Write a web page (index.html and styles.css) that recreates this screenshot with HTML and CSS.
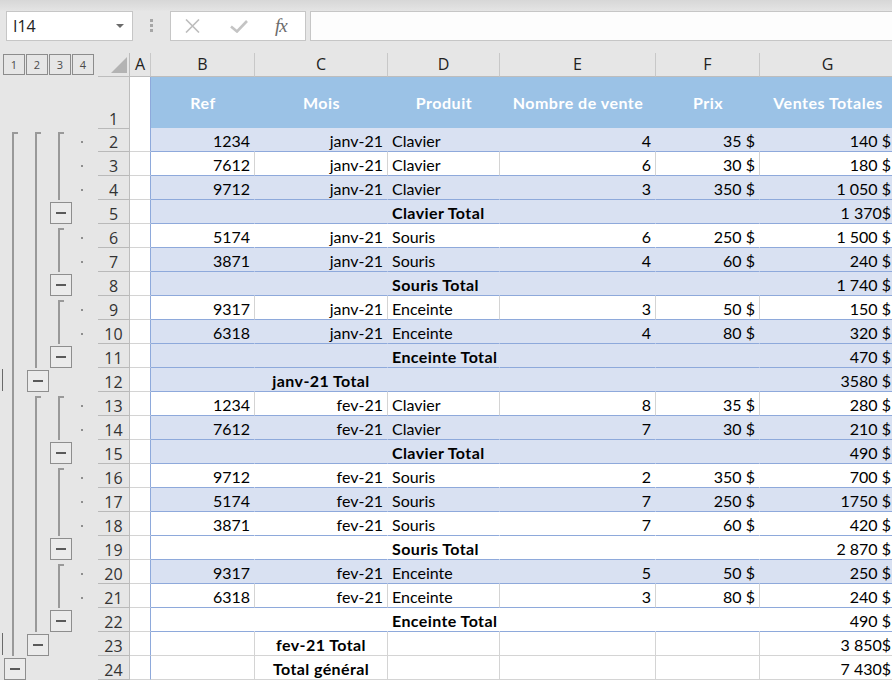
FILE: index.html
```html
<!DOCTYPE html>
<html lang="fr">
<head>
<meta charset="utf-8">
<title>Sous-totaux</title>
<link rel="stylesheet" href="styles.css">
</head>
<body>
<div class="fbar">
  <div class="namebox"><span>I14</span><svg width="8" height="4" viewBox="0 0 8 4"><path d="M0 0H8L4 4Z" fill="#6a6a6a"/></svg></div>
  <div class="grip"><i></i><i></i><i></i></div>
  <div class="fbtns">
    <svg class="ic-x" width="15" height="14" viewBox="0 0 15 14"><path d="M1 0.5L14 13.5M14 0.5L1 13.5" stroke="#bdbdbd" stroke-width="1.6" fill="none"/></svg>
    <svg class="ic-ok" width="18" height="13" viewBox="0 0 18 13"><path d="M1 6.5L7 11.5L17 1" stroke="#c4c4c4" stroke-width="2.6" fill="none"/></svg>
    <span class="fx"><i>f</i><i>x</i></span>
  </div>
  <div class="finput"></div>
</div>

<div class="sheet">
  <div class="row hd">
    <div class="lv"><span>1</span><span>2</span><span>3</span><span>4</span></div>
    <div class="corner"><svg width="16" height="16" viewBox="0 0 16 16"><path d="M16 0V16H0Z" fill="#b3b3b3"/></svg></div>
    <div class="ch">A</div><div class="ch">B</div><div class="ch">C</div><div class="ch">D</div><div class="ch">E</div><div class="ch">F</div><div class="ch">G</div>
  </div>

  <div class="row r1">
    <div class="g"><i></i><i></i><i></i><i></i><i></i></div>
    <div class="rn">1</div><div class="a"></div>
    <div class="th">Ref</div><div class="th">Mois</div><div class="th">Produit</div><div class="th">Nombre de vente</div><div class="th">Prix</div><div class="th">Ventes Totales</div>
  </div>

  <div class="row b">
    <div class="g"><i></i><i class="ls"></i><i class="ls"></i><i class="ls"></i><i class="ld"></i></div>
    <div class="rn">2</div><div class="a"></div>
    <div class="c r">1234</div><div class="c r">janv-21</div><div class="c">Clavier</div><div class="c r">4</div><div class="c r">35 $</div><div class="c r">140 $</div>
  </div>
  <div class="row w gl">
    <div class="g"><i></i><i class="ll"></i><i class="ll"></i><i class="ll"></i><i class="ld"></i></div>
    <div class="rn">3</div><div class="a"></div>
    <div class="c r">7612</div><div class="c r">janv-21</div><div class="c">Clavier</div><div class="c r">6</div><div class="c r">30 $</div><div class="c r">180 $</div>
  </div>
  <div class="row b">
    <div class="g"><i></i><i class="ll"></i><i class="ll"></i><i class="ll"></i><i class="ld"></i></div>
    <div class="rn">4</div><div class="a"></div>
    <div class="c r">9712</div><div class="c r">janv-21</div><div class="c">Clavier</div><div class="c r">3</div><div class="c r">350 $</div><div class="c r">1 050 $</div>
  </div>
  <div class="row b">
    <div class="g"><i></i><i class="ll"></i><i class="ll"></i><i class="lb"><span></span></i><i></i></div>
    <div class="rn">5</div><div class="a"></div>
    <div class="c"></div><div class="c"></div><div class="c k">Clavier Total</div><div class="c"></div><div class="c"></div><div class="c r">1 370$</div>
  </div>
  <div class="row w">
    <div class="g"><i></i><i class="ll"></i><i class="ll"></i><i class="ls"></i><i class="ld"></i></div>
    <div class="rn">6</div><div class="a"></div>
    <div class="c r">5174</div><div class="c r">janv-21</div><div class="c">Souris</div><div class="c r">6</div><div class="c r">250 $</div><div class="c r">1 500 $</div>
  </div>
  <div class="row b">
    <div class="g"><i></i><i class="ll"></i><i class="ll"></i><i class="ll"></i><i class="ld"></i></div>
    <div class="rn">7</div><div class="a"></div>
    <div class="c r">3871</div><div class="c r">janv-21</div><div class="c">Souris</div><div class="c r">4</div><div class="c r">60 $</div><div class="c r">240 $</div>
  </div>
  <div class="row b">
    <div class="g"><i></i><i class="ll"></i><i class="ll"></i><i class="lb"><span></span></i><i></i></div>
    <div class="rn">8</div><div class="a"></div>
    <div class="c"></div><div class="c"></div><div class="c k">Souris Total</div><div class="c"></div><div class="c"></div><div class="c r">1 740 $</div>
  </div>
  <div class="row w gl">
    <div class="g"><i></i><i class="ll"></i><i class="ll"></i><i class="ls"></i><i class="ld"></i></div>
    <div class="rn">9</div><div class="a"></div>
    <div class="c r">9317</div><div class="c r">janv-21</div><div class="c">Enceinte</div><div class="c r">3</div><div class="c r">50 $</div><div class="c r">150 $</div>
  </div>
  <div class="row b">
    <div class="g"><i></i><i class="ll"></i><i class="ll"></i><i class="ll"></i><i class="ld"></i></div>
    <div class="rn">10</div><div class="a"></div>
    <div class="c r">6318</div><div class="c r">janv-21</div><div class="c">Enceinte</div><div class="c r">4</div><div class="c r">80 $</div><div class="c r">320 $</div>
  </div>
  <div class="row b">
    <div class="g"><i></i><i class="ll"></i><i class="ll"></i><i class="lb"><span></span></i><i></i></div>
    <div class="rn">11</div><div class="a"></div>
    <div class="c"></div><div class="c"></div><div class="c k">Enceinte Total</div><div class="c"></div><div class="c"></div><div class="c r">470 $</div>
  </div>
  <div class="row b">
    <div class="g"><i class="lm"></i><i class="ll"></i><i class="lb"><span></span></i><i></i><i></i></div>
    <div class="rn">12</div><div class="a"></div>
    <div class="c"></div><div class="c k m">janv-21 Total</div><div class="c"></div><div class="c"></div><div class="c"></div><div class="c r">3580 $</div>
  </div>
  <div class="row w gl">
    <div class="g"><i></i><i class="ll"></i><i class="ls"></i><i class="ls"></i><i class="ld"></i></div>
    <div class="rn">13</div><div class="a"></div>
    <div class="c r">1234</div><div class="c r">fev-21</div><div class="c">Clavier</div><div class="c r">8</div><div class="c r">35 $</div><div class="c r">280 $</div>
  </div>
  <div class="row b">
    <div class="g"><i></i><i class="ll"></i><i class="ll"></i><i class="ll"></i><i class="ld"></i></div>
    <div class="rn">14</div><div class="a"></div>
    <div class="c r">7612</div><div class="c r">fev-21</div><div class="c">Clavier</div><div class="c r">7</div><div class="c r">30 $</div><div class="c r">210 $</div>
  </div>
  <div class="row b">
    <div class="g"><i></i><i class="ll"></i><i class="ll"></i><i class="lb"><span></span></i><i></i></div>
    <div class="rn">15</div><div class="a"></div>
    <div class="c"></div><div class="c"></div><div class="c k">Clavier Total</div><div class="c"></div><div class="c"></div><div class="c r">490 $</div>
  </div>
  <div class="row w">
    <div class="g"><i></i><i class="ll"></i><i class="ll"></i><i class="ls"></i><i class="ld"></i></div>
    <div class="rn">16</div><div class="a"></div>
    <div class="c r">9712</div><div class="c r">fev-21</div><div class="c">Souris</div><div class="c r">2</div><div class="c r">350 $</div><div class="c r">700 $</div>
  </div>
  <div class="row b">
    <div class="g"><i></i><i class="ll"></i><i class="ll"></i><i class="ll"></i><i class="ld"></i></div>
    <div class="rn">17</div><div class="a"></div>
    <div class="c r">5174</div><div class="c r">fev-21</div><div class="c">Souris</div><div class="c r">7</div><div class="c r">250 $</div><div class="c r">1750 $</div>
  </div>
  <div class="row w">
    <div class="g"><i></i><i class="ll"></i><i class="ll"></i><i class="ll"></i><i class="ld"></i></div>
    <div class="rn">18</div><div class="a"></div>
    <div class="c r">3871</div><div class="c r">fev-21</div><div class="c">Souris</div><div class="c r">7</div><div class="c r">60 $</div><div class="c r">420 $</div>
  </div>
  <div class="row w">
    <div class="g"><i></i><i class="ll"></i><i class="ll"></i><i class="lb"><span></span></i><i></i></div>
    <div class="rn">19</div><div class="a"></div>
    <div class="c"></div><div class="c"></div><div class="c k">Souris Total</div><div class="c"></div><div class="c"></div><div class="c r">2 870 $</div>
  </div>
  <div class="row b">
    <div class="g"><i></i><i class="ll"></i><i class="ll"></i><i class="ls"></i><i class="ld"></i></div>
    <div class="rn">20</div><div class="a"></div>
    <div class="c r">9317</div><div class="c r">fev-21</div><div class="c">Enceinte</div><div class="c r">5</div><div class="c r">50 $</div><div class="c r">250 $</div>
  </div>
  <div class="row w gl">
    <div class="g"><i></i><i class="ll"></i><i class="ll"></i><i class="ll"></i><i class="ld"></i></div>
    <div class="rn">21</div><div class="a"></div>
    <div class="c r">6318</div><div class="c r">fev-21</div><div class="c">Enceinte</div><div class="c r">3</div><div class="c r">80 $</div><div class="c r">240 $</div>
  </div>
  <div class="row w">
    <div class="g"><i></i><i class="ll"></i><i class="ll"></i><i class="lb"><span></span></i><i></i></div>
    <div class="rn">22</div><div class="a"></div>
    <div class="c"></div><div class="c"></div><div class="c k">Enceinte Total</div><div class="c"></div><div class="c"></div><div class="c r">490 $</div>
  </div>
  <div class="row o">
    <div class="g"><i class="lm"></i><i class="ll"></i><i class="lb"><span></span></i><i></i><i></i></div>
    <div class="rn">23</div><div class="a"></div>
    <div class="c"></div><div class="c k m">fev-21 Total</div><div class="c"></div><div class="c"></div><div class="c"></div><div class="c r">3 850$</div>
  </div>
  <div class="row o">
    <div class="g"><i></i><i class="lb"><span></span></i><i></i><i></i><i></i></div>
    <div class="rn">24</div><div class="a"></div>
    <div class="c"></div><div class="c k m">Total général</div><div class="c"></div><div class="c"></div><div class="c"></div><div class="c r">7 430$</div>
  </div>
</div>
</body>
</html>
```

FILE: styles.css
```css
html, body {
  margin: 0;
  padding: 0;
}
body {
  width: 892px;
  height: 680px;
  overflow: hidden;
  background: #e6e6e6;
  font-family: "Lato", "Liberation Sans", sans-serif;
}

/* formula bar */
.fbar {
  height: 53px;
  box-sizing: border-box;
  padding: 11px 0 0 6px;
  display: flex;
  align-items: flex-start;
  background: linear-gradient(#d7d7d7, #e3e3e3 10px, #e6e6e6 11px);
}
.namebox {
  width: 127px;
  height: 30px;
  box-sizing: border-box;
  border: 1px solid #c6c6c6;
  background: #fff;
  display: flex;
  align-items: center;
  justify-content: space-between;
  padding: 0 8px 0 6px;
  font: 16px "Open Sans", sans-serif;
  color: #222;
}
.grip {
  margin: 8px 0 0 17px;
  display: flex;
  flex-direction: column;
  gap: 2px;
}
.grip i {
  display: block;
  width: 3px;
  height: 3px;
  background: #a6a6a6;
}
.fbtns {
  margin-left: 17px;
  width: 136px;
  height: 30px;
  box-sizing: border-box;
  border: 1px solid #c6c6c6;
  background: #fff;
  display: flex;
  align-items: center;
}
.ic-x { margin-left: 14px; }
.ic-ok { margin-left: 30px; }
.fx {
  margin-left: 27px;
  font: italic 19px "Liberation Serif", serif;
  color: #6b6b6b;
  letter-spacing: -1px;
}
.fx i { font-style: italic; }
.finput {
  margin-left: 4px;
  flex: 1;
  height: 30px;
  box-sizing: border-box;
  border: 1px solid #c6c6c6;
  border-right: none;
  background: #fdfdfd;
}

/* sheet */
.sheet {
  width: 896px;
}
.row {
  display: grid;
  grid-template-columns: 98px 32px 21px 104px 133px 112px 156px 104px 136px;
  height: 24px;
}
.row.r1 { height: 51px; }

/* column header row */
.lv {
  display: flex;
  gap: 1px;
  padding: 1px 0 0 3px;
}
.lv span {
  width: 22px;
  height: 21px;
  box-sizing: border-box;
  border: 1px solid #8c8c8c;
  font: 11px/19px "Open Sans", sans-serif;
  text-align: center;
  color: #4a4a4a;
}
.corner {
  box-sizing: border-box;
  border-right: 1px solid #bdbdbd;
  border-bottom: 1px solid #bdbdbd;
  display: flex;
  align-items: flex-end;
  justify-content: flex-end;
  padding: 0 2px 3px 0;
}
.ch {
  box-sizing: border-box;
  border-right: 1px solid #c8c8c8;
  border-bottom: 1px solid #bdbdbd;
  text-align: center;
  font: 16px/22px "Open Sans", sans-serif;
  color: #222;
}

/* outline gutter */
.g {
  display: grid;
  grid-template-columns: 4px 23px 23px 23px 23px;
}
.g > i {
  display: block;
}
.ll {
  background: linear-gradient(#999, #999) 8px 0 / 2px 100% no-repeat;
}
.ls {
  background:
    linear-gradient(#999, #999) 8px 4px / 2px calc(100% - 4px) no-repeat,
    linear-gradient(#999, #999) 8px 4px / 6px 2px no-repeat;
}
.ld {
  background: linear-gradient(#8e8e8e, #8e8e8e) 8px 13px / 2px 2px no-repeat;
}
.lm {
  background: linear-gradient(#6a6a6a, #6a6a6a) 2px 1px / 1px 22px no-repeat;
}
.lb {
  padding-top: 2px;
}
.lb span {
  width: 22px;
  height: 22px;
  box-sizing: border-box;
  border: 1px solid #8e8e8e;
  background: #ebebeb;
  display: flex;
  align-items: center;
  justify-content: center;
}
.lb span::after {
  content: "";
  width: 10px;
  height: 2px;
  background: #5a5a5a;
}

/* row numbers */
.rn {
  box-sizing: border-box;
  border-bottom: 1px solid #b9b9b9;
  border-right: 1px solid #bdbdbd;
  display: flex;
  align-items: flex-end;
  justify-content: center;
  padding-bottom: 1px;
  font: 16px/1 "Open Sans", sans-serif;
  color: #333;
}

/* cells */
.a {
  box-sizing: border-box;
  background: #fff;
  border-bottom: 1px solid #d4d4d4;
  border-right: 1px solid #8ea9db;
}
.th {
  box-sizing: border-box;
  background: #9bc2e6;
  border-bottom: 1px solid #8ea9db;
  color: #fff;
  font-weight: bold;
  font-size: 16px;
  letter-spacing: 0.5px;
  line-height: 51px;
  text-align: center;
  white-space: nowrap;
}
.c {
  box-sizing: border-box;
  border-right: 1px solid transparent;
  border-bottom: 1px solid #8ea9db;
  padding: 2px 4px 0;
  font-size: 16px;
  line-height: 21px;
  color: #000;
  white-space: nowrap;
}
.b .c { background: #d9e1f2; }
.w .c { background: #fff; }
.gl .c { border-right-color: #d4d4d4; }
.o .c {
  background: #fff;
  border-right-color: #d4d4d4;
  border-bottom-color: #d4d4d4;
}
.r { text-align: right; }
.m { text-align: center; }
.k {
  font-weight: bold;
  letter-spacing: 0.4px;
}
```
